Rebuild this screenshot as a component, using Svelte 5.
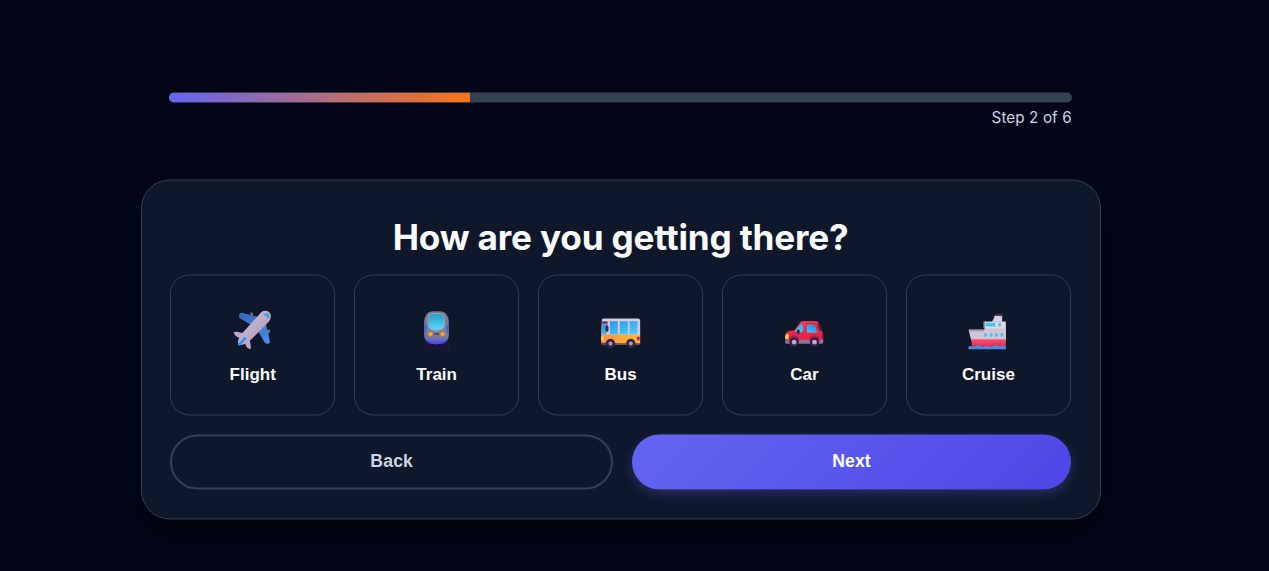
<script lang="ts">
  type Mode = 'flight' | 'train' | 'bus' | 'car' | 'cruise';

  const options: { id: Mode; label: string }[] = [
    { id: 'flight', label: 'Flight' },
    { id: 'train', label: 'Train' },
    { id: 'bus', label: 'Bus' },
    { id: 'car', label: 'Car' },
    { id: 'cruise', label: 'Cruise' },
  ];

  const TOTAL_STEPS = 6;
  let step = $state(2);
  let selected = $state<Mode | null>(null);

  const progress = $derived((step / TOTAL_STEPS) * 100);
</script>

<main class="planner">
  <div class="progress">
    <div class="progress-track">
      <div class="progress-fill" style="width: {progress}%"></div>
    </div>
    <div class="progress-label">Step {step} of {TOTAL_STEPS}</div>
  </div>

  <section class="card">
    <h2>How are you getting there?</h2>

    <div class="options">
      {#each options as o (o.id)}
        <button class="option" aria-pressed={selected === o.id} onclick={() => (selected = o.id)}>
          <svg class="icon" viewBox="33.5 30 120 120" aria-hidden="true">
            {#if o.id === 'flight'}
              <defs>
                <linearGradient id="plane-wing" x1="0" y1="0" x2="1" y2="1">
                  <stop offset="0" stop-color="#3567b8" />
                  <stop offset="1" stop-color="#468ee9" />
                </linearGradient>
                <linearGradient id="plane-body" x1="0" y1="0" x2="1" y2="1">
                  <stop offset="0" stop-color="#d0c5dc" />
                  <stop offset="1" stop-color="#aa91b8" />
                </linearGradient>
              </defs>
              <path d="M84 43l5-5 4 3v10zM134 95l7-6 5 4-4 8-7 4z" fill="#7e7284" />
              <path d="M52 47q2-8 10-7l53 14-25 23-35-20q-5-3-3-10zM106 90l24-26 14 60q2 9-8 9-6 0-9-6z" fill="url(#plane-wing)" />
              <path d="M35 99q5-3 11-2l20 4-3 16-16-4q-9-4-12-14zM68 120l15-3 4 23q1 7-2 9-10-2-14-14z" fill="#bca5cb" />
              <path d="M118 38q12-8 23-1 10 8 4 23-3 6-10 13l-47 47q-12 12-23 15-11 3-15-2-4-6 2-18 4-8 13-18z" fill="url(#plane-body)" />
              <path d="M50 132l15-16q4-4 7-3 3 2-1 8l-13 14q-6 6-9 3-3-2 1-6z" fill="#258ff2" />
              <path d="M127 43q5-4 11 0 6 5 3 11l-3 2q-1-7-10-8z" fill="#119ce9" />
              <path d="M132 43l-2 5M138 47l-4 4" stroke="#d5caea" stroke-width="2" />
            {:else if o.id === 'train'}
              <defs>
                <linearGradient id="train-body" x1="0" y1="0" x2="0" y2="1">
                  <stop offset="0" stop-color="#77758a" />
                  <stop offset=".65" stop-color="#858295" />
                  <stop offset="1" stop-color="#5a5cc4" />
                </linearGradient>
                <linearGradient id="train-glass" x1="0" y1="0" x2="0" y2="1">
                  <stop offset="0" stop-color="#259cc7" />
                  <stop offset="1" stop-color="#5cddff" />
                </linearGradient>
                <radialGradient id="train-lamp">
                  <stop offset=".4" stop-color="#ffab20" />
                  <stop offset="1" stop-color="#d58a3a" />
                </radialGradient>
              </defs>
              <path d="M61 132h63l7 17H53z" fill="#1c1038" stroke="#38165f" stroke-width="2" />
              <path d="M55 69q0-32 24-34h26q24 2 24 34v35q0 29-37 30-37-1-37-30z" fill="url(#train-body)" />
              <path d="M55 66l9 18-3 18-6-4zM129 66l-9 18 3 18 6-4z" fill="#4669cf" />
              <path d="M57 117q11 9 35 10 24-1 35-10-5 17-35 17t-35-17z" fill="#434ef2" />
              <path d="M67 56q0-13 11-14h28q10 1 10 14v18q0 12-9 16-15 6-30 0-10-4-10-16z" fill="url(#train-glass)" stroke="#a39fac" stroke-width="3" />
              <path d="M84 103h16" stroke="#373144" stroke-width="4" />
              <circle cx="74" cy="104" r="7" fill="url(#train-lamp)" />
              <circle cx="110" cy="104" r="7" fill="url(#train-lamp)" />
            {:else if o.id === 'bus'}
              <defs>
                <linearGradient id="bus-body" x1="0" y1="0" x2="1" y2="0">
                  <stop offset="0" stop-color="#ff8c4b" />
                  <stop offset="1" stop-color="#ffc02e" />
                </linearGradient>
                <linearGradient id="bus-glass" x1="0" y1="0" x2="1" y2="1">
                  <stop offset="0" stop-color="#2990e5" />
                  <stop offset="1" stop-color="#4ed0fb" />
                </linearGradient>
              </defs>
              <path d="M36 62q0-5 6-5h102q7 0 7 7v43H34z" fill="#d7cae0" />
              <path d="M34 105h117v25q0 6-6 6H41q-7 0-7-7z" fill="url(#bus-body)" />
              <path d="M37 73h13v31H36zM60 65h24v39H60zM90 65h24v39H90zM119 65h24v39h-24z" fill="url(#bus-glass)" />
              <path d="M37 66h16v6H37zM47 82q0-4 5-4 4 0 4 5v9q0 5-5 5-4 0-4-5z" fill="#382654" />
              <path d="M52 72v8" stroke="#382654" stroke-width="2" />
              <rect x="34" y="110" width="7" height="14" rx="3" fill="#ffe052" />
              <rect x="141" y="111" width="9" height="12" rx="4" fill="#e31a67" />
              <path d="M34 130h16v7H38q-4 0-4-7zM75 131h34v5H75zM136 131h15q0 5-5 5h-10z" fill="#654152" />
              <circle cx="62" cy="132" r="14" fill="#382348" />
              <circle cx="62" cy="132" r="6" fill="#ac9dba" />
              <circle cx="123" cy="132" r="14" fill="#382348" />
              <circle cx="123" cy="132" r="6" fill="#ac9dba" />
            {:else if o.id === 'car'}
              <defs>
                <linearGradient id="car-glass" x1="0" y1="1" x2="1" y2="0">
                  <stop offset="0" stop-color="#49d5f9" />
                  <stop offset="1" stop-color="#268add" />
                </linearGradient>
              </defs>
              <path d="M35 103q2-7 14-9l12-2 15-20q5-7 15-7h35q8 0 10 8l10 25q2 4 2 14v15H36z" fill="#e92645" />
              <path d="M35 121h113v8q0 4-5 4H39q-5 0-5-5z" fill="#8c7498" />
              <path d="M63 95l16-20q3-4 7-2l3 20-7 6H68zM99 75h20q5 0 6 5l5 20H99z" fill="url(#car-glass)" />
              <path d="M75 71q5-6 16-6h35q7 0 9 6l-38-1-5 23-5-22z" fill="#ff3653" />
              <path d="M136 73l7 22-7-2-5-21z" fill="#45263d" />
              <ellipse cx="73" cy="97" rx="5" ry="7" fill="#32254a" />
              <path d="M36 104h9v11q0 4-5 4h-6v-9z" fill="#ffd236" />
              <path d="M144 104h4v13h-5q-3-7 1-13z" fill="#a6144f" />
              <path d="M44 123q1-16 16-16t17 16zM106 123q1-16 16-16t17 16z" fill="#ad1e47" />
              <circle cx="61" cy="128" r="14" fill="#372044" />
              <circle cx="61" cy="128" r="7" fill="#bfa9c6" />
              <circle cx="122" cy="128" r="14" fill="#372044" />
              <circle cx="122" cy="128" r="7" fill="#bfa9c6" />
            {:else}
              <defs>
                <linearGradient id="ship-hull" x1="0" y1="0" x2="0" y2="1">
                  <stop offset="0" stop-color="#ff5365" />
                  <stop offset="1" stop-color="#d72659" />
                </linearGradient>
              </defs>
              <path d="M113 52q0-7 8-9h16v12h-29z" fill="#45334b" />
              <path d="M114 49l22 1v17h-31q6-7 9-18z" fill="#d8d0e3" />
              <path d="M83 66h64v57H83z" fill="#e0d8e7" />
              <path d="M35 91h49v-4h63v35H43z" fill="#d0c5d8" />
              <path d="M36 90h48l-4 5H38zM83 66h-3v20h4z" fill="#a89aaf" />
              <path d="M43 119h104v26H46z" fill="url(#ship-hull)" />
              <rect x="86" y="70" width="30" height="11" rx="3" fill="#3bc9ee" />
              <g fill="#3dc6e9">
                <rect x="124" y="70" width="8" height="11" rx="4" />
                <rect x="82" y="101" width="8" height="11" rx="3" />
                <rect x="99" y="101" width="8" height="11" rx="3" />
                <rect x="115" y="101" width="8" height="11" rx="3" />
                <rect x="131" y="101" width="8" height="11" rx="3" />
              </g>
              <path d="M35 141q8-3 12 0t11-2q7-5 13 0t13 2q7-5 13 0t13-2q6-4 12 0t13 0l12 1v10H35z" fill="#458ee5" />
            {/if}
          </svg>
          <span>{o.label}</span>
        </button>
      {/each}
    </div>

    <div class="actions">
      <button class="btn back" onclick={() => (step = Math.max(1, step - 1))}>Back</button>
      <button class="btn next" onclick={() => (step = Math.min(TOTAL_STEPS, step + 1))}>Next</button>
    </div>
  </section>
</main>

<style>
  :global(body) {
    background: #020617;
    overflow: hidden;
  }

  .planner {
    box-sizing: border-box;
    width: 960px;
    min-height: 571px;
    margin-left: 140.6px;
    padding-top: 92px;
    font-family: Inter, 'Liberation Sans', sans-serif;
    transform: translateY(0.5px);
  }

  .progress {
    padding: 0 28.8px;
  }

  .progress-track {
    height: 10px;
    border-radius: 5px;
    background: #334155;
    overflow: hidden;
  }

  .progress-fill {
    height: 100%;
    background: linear-gradient(90deg, #6366f1, #f97316);
  }

  .progress-label {
    margin-top: 5.4px;
    font-size: 15.2px;
    line-height: 20.6px;
    letter-spacing: 0.12px;
    text-align: right;
    color: #cbd5e1;
  }

  .card {
    box-sizing: border-box;
    height: 340px;
    margin-top: 51px;
    padding: 28.8px;
    border: 1px solid #334155;
    border-radius: 28.8px;
    background: #0f172a;
    box-shadow: 0 14px 28px -4px rgba(0, 0, 0, 0.6);
  }

  h2 {
    margin: 5px 0 16px;
    font-size: 35.2px;
    font-weight: 700;
    line-height: 44px;
    letter-spacing: -0.2px;
    text-align: center;
    color: #f8fafc;
  }

  .options {
    display: grid;
    grid-template-columns: repeat(5, 1fr);
    gap: 19.2px;
  }

  button {
    font-family: 'Liberation Sans', Arial, sans-serif;
    cursor: pointer;
  }

  .option {
    display: flex;
    flex-direction: column;
    align-items: center;
    box-sizing: border-box;
    height: 141px;
    padding: 34.5px 0 0;
    border: 1px solid #334155;
    border-radius: 19.2px;
    background: #0f172a;
    color: #f8fafc;
    font-size: 17px;
    font-weight: 600;
    line-height: 20px;
  }

  .icon {
    width: 40px;
    height: 40px;
    margin-bottom: 15px;
  }

  .actions {
    display: flex;
    gap: 19.2px;
    margin-top: 19px;
  }

  .btn {
    flex: 1;
    height: 55px;
    padding: 0 28.8px 2px;
    border: none;
    border-radius: 28px;
    font-size: 17.6px;
    font-weight: 600;
    letter-spacing: 0.15px;
  }

  .back {
    border: 2px solid #334155;
    background: transparent;
    color: #cbd5e1;
  }

  .next {
    background: linear-gradient(135deg, #6366f1, #4f46e5);
    color: #fff;
    box-shadow: 0 4px 12px rgba(99, 102, 241, 0.3);
  }
</style>
